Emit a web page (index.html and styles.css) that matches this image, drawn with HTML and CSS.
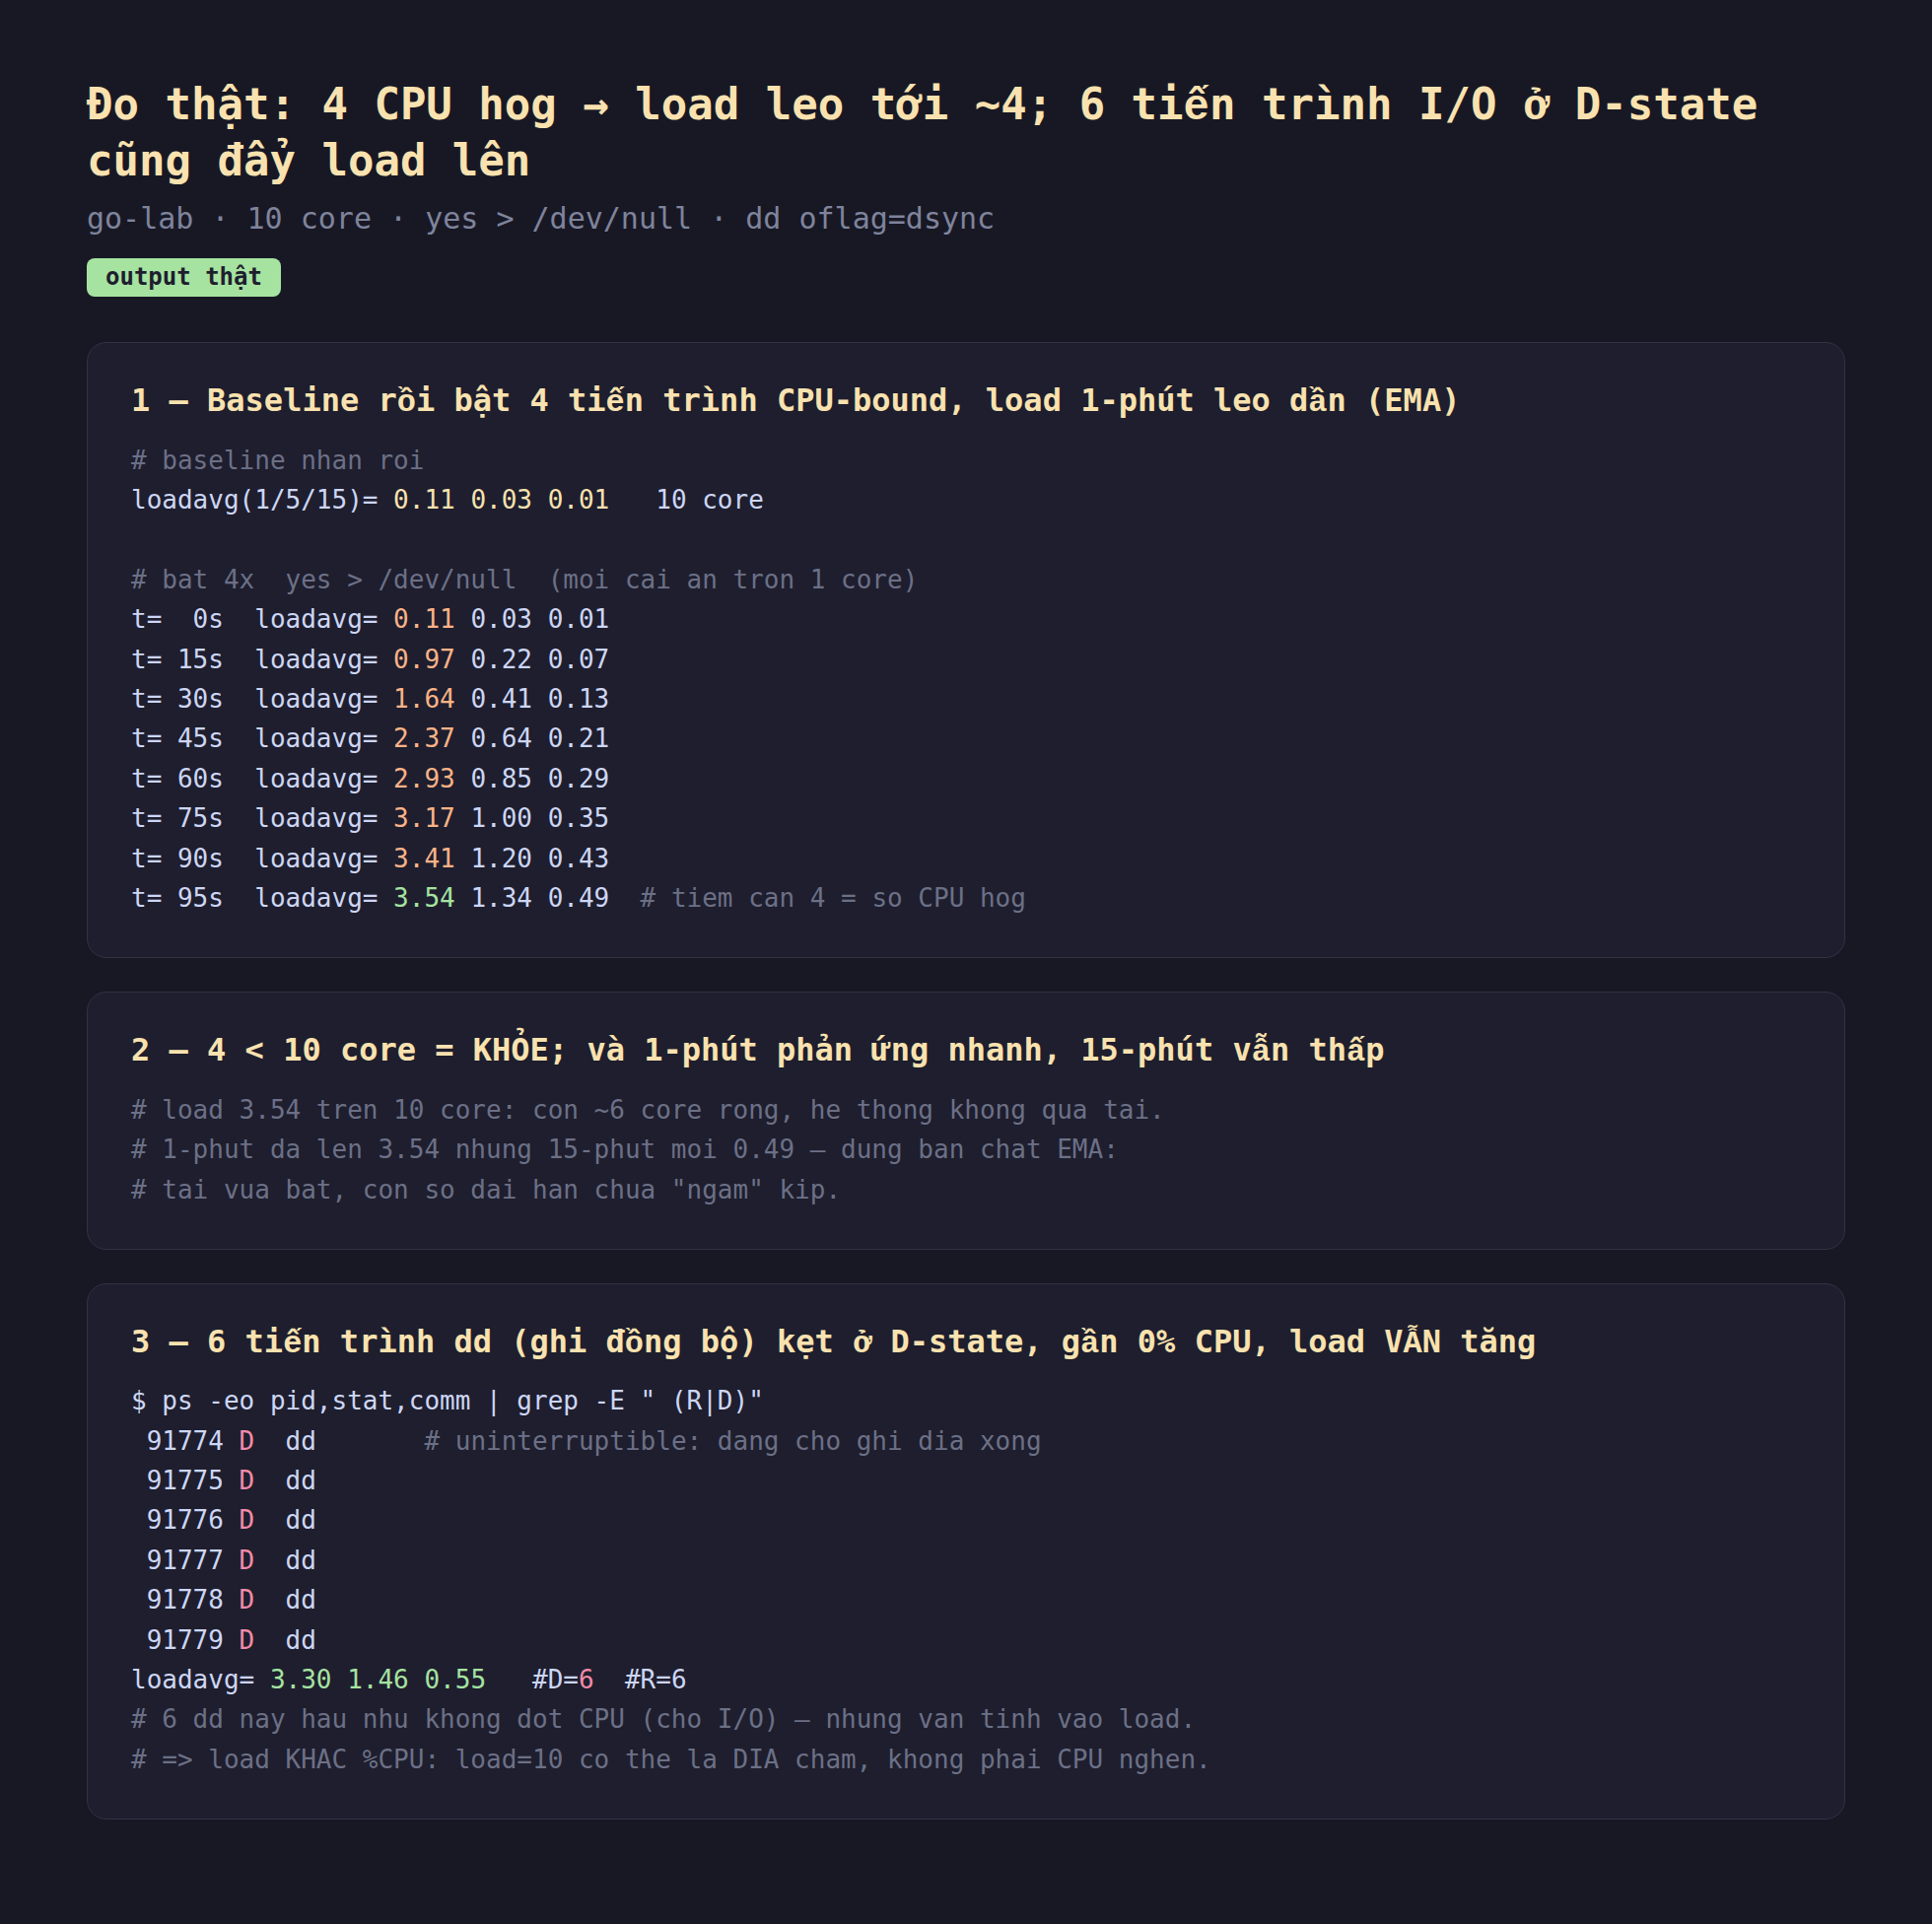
FILE: index.html
```html
<!DOCTYPE html>
<html lang="vi">
<head>
<meta charset="utf-8">
<title>Đo thật: load average</title>
<link rel="stylesheet" href="styles.css">
</head>
<body>
<main class="page">
  <header class="head">
    <h1 class="title">Đo thật: 4 CPU hog → load leo tới ~4; 6 ti<span class="vi">ế</span>n trình I/O <span class="vi">ở</span> D-state cũng đẩy load lên</h1>
    <p class="sub">go-lab · 10 core · yes &gt; /dev/null · dd oflag=dsync</p>
    <span class="badge">output thật</span>
  </header>

  <section class="cards">
    <article class="card">
      <h2 class="card-title">1 — Baseline r<span class="vi">ồ</span>i bật 4 ti<span class="vi">ế</span>n trình CPU-bound, load 1-phút leo d<span class="vi">ầ</span>n (EMA)</h2>
<pre class="code"><span class="c"># baseline nhan roi</span>
loadavg(1/5/15)= <span class="y">0.11 0.03 0.01</span>   10 core

<span class="c"># bat 4x  yes &gt; /dev/null  (moi cai an tron 1 core)</span>
t=  0s  loadavg= <span class="o">0.11</span> 0.03 0.01
t= 15s  loadavg= <span class="o">0.97</span> 0.22 0.07
t= 30s  loadavg= <span class="o">1.64</span> 0.41 0.13
t= 45s  loadavg= <span class="o">2.37</span> 0.64 0.21
t= 60s  loadavg= <span class="o">2.93</span> 0.85 0.29
t= 75s  loadavg= <span class="o">3.17</span> 1.00 0.35
t= 90s  loadavg= <span class="o">3.41</span> 1.20 0.43
t= 95s  loadavg= <span class="g">3.54</span> 1.34 0.49  <span class="c"># tiem can 4 = so CPU hog</span></pre>
    </article>

    <article class="card">
      <h2 class="card-title">2 — 4 &lt; 10 core = KHỎE; và 1-phút phản ứng nhanh, 15-phút v<span class="vi">ẫ</span>n th<span class="vi">ấ</span>p</h2>
<pre class="code"><span class="c"># load 3.54 tren 10 core: con ~6 core rong, he thong khong qua tai.
# 1-phut da len 3.54 nhung 15-phut moi 0.49 — dung ban chat EMA:
# tai vua bat, con so dai han chua "ngam" kip.</span></pre>
    </article>

    <article class="card">
      <h2 class="card-title">3 — 6 ti<span class="vi">ế</span>n trình dd (ghi đ<span class="vi">ồ</span>ng bộ) kẹt <span class="vi">ở</span> D-state, g<span class="vi">ầ</span>n 0% CPU, load V<span class="vi">Ẫ</span>N tăng</h2>
<pre class="code">$ ps -eo pid,stat,comm | grep -E " (R|D)"
 91774 <span class="r">D</span>  dd       <span class="c"># uninterruptible: dang cho ghi dia xong</span>
 91775 <span class="r">D</span>  dd
 91776 <span class="r">D</span>  dd
 91777 <span class="r">D</span>  dd
 91778 <span class="r">D</span>  dd
 91779 <span class="r">D</span>  dd
loadavg= <span class="g">3.30 1.46 0.55</span>   #D=<span class="r">6</span>  #R=6
<span class="c"># 6 dd nay hau nhu khong dot CPU (cho I/O) — nhung van tinh vao load.
# =&gt; load KHAC %CPU: load=10 co the la DIA cham, khong phai CPU nghen.</span></pre>
    </article>
  </section>
</main>
</body>
</html>
```

FILE: styles.css
```css
html {
  background: #181825;
}

body {
  margin: 0;
  background: #181825;
  color: #cdd6f4;
  font-family: "DejaVu Sans Mono", "Liberation Mono", monospace;
}

.page {
  padding: 77px 88px 80px;
}

.head {
  display: flex;
  flex-direction: column;
  align-items: flex-start;
}

.title {
  margin: 0;
  font-size: 44px;
  line-height: 1.3;
  font-weight: 700;
  color: #f9e2af;
}

.sub {
  margin: 8px 0 0;
  font-size: 30px;
  line-height: 1.5;
  color: #7f849c;
}

.badge {
  margin-top: 18px;
  padding: 5px 19px;
  font-size: 24px;
  line-height: 29px;
  font-weight: 700;
  color: #1e1e2e;
  background: #a6e3a1;
  border-radius: 8px;
}

.cards {
  margin-top: 46px;
  display: flex;
  flex-direction: column;
  gap: 34px;
}

.card {
  background: #1e1e2e;
  border: 1px solid #313244;
  border-radius: 20px;
  padding: 40px 44px 40px;
}

.card-title {
  margin: 0;
  font-size: 32px;
  line-height: 1.164;
  font-weight: 700;
  color: #f9e2af;
}

/* Vietnamese letters with stacked marks, which DejaVu Sans Mono lacks.
   line-height 0 keeps the fallback font from growing the line box. */
.vi {
  font-family: "Liberation Mono", "DejaVu Sans Mono", monospace;
  line-height: 0;
}

.code {
  margin: 21px 0 0;
  font-family: "DejaVu Sans Mono", "Liberation Mono", monospace;
  font-size: 26px;
  line-height: 40.4px;
  color: #cdd6f4;
  white-space: pre;
}

.c { color: #6c7086; }
.y { color: #f9e2af; }
.o { color: #fab387; }
.g { color: #a6e3a1; }
.r { color: #f38ba8; }
```
